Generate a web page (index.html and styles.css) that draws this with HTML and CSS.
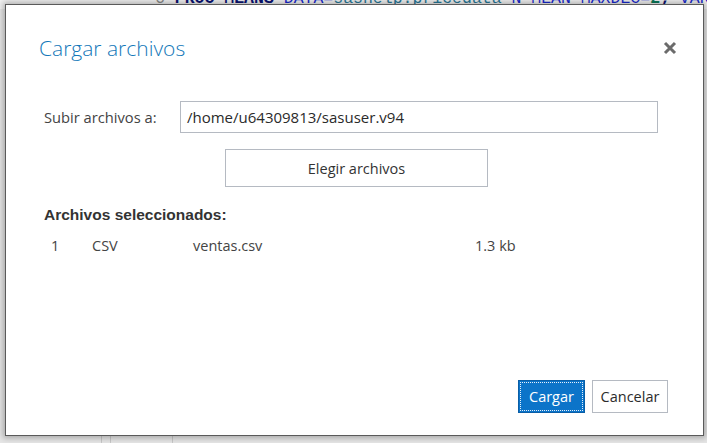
FILE: index.html
```html
<!DOCTYPE html>
<html lang="es">
<head>
<meta charset="utf-8">
<title>Cargar archivos</title>
<link rel="stylesheet" href="styles.css">
</head>
<body>
<div class="page">
  <div class="editor">
    <div class="code-line"><span class="ln">6</span> <span class="kw">PROC MEANS</span> <span class="opt">DATA=</span><span class="ds">sashelp.pricedata</span> <span class="opt">N MEAN MAXDEC=</span><span class="num">2</span><span class="kw">;</span> <span class="opt">VAR</span></div>
    <div class="gutter-lines">
      <span class="gl gl1"></span><span class="gl gl2"></span><span class="gl gl3"></span>
    </div>
  </div>

  <div class="dialog" role="dialog" aria-label="Cargar archivos">
    <div class="dlg-header">
      <h1 class="dlg-title">Cargar archivos</h1>
      <button class="close" aria-label="Cerrar">
        <svg width="14" height="14" viewBox="0 0 14 14"><path d="M2 2 L12 12 M12 2 L2 12" stroke="#6b6b6b" stroke-width="3" stroke-linecap="butt"/></svg>
      </button>
    </div>
    <div class="dlg-body">
      <div class="form-row">
        <label class="lbl">Subir archivos a:</label>
        <div class="input">/home/u64309813/sasuser.v94</div>
      </div>
      <div class="choose-row">
        <button class="btn choose">Elegir archivos</button>
      </div>
      <div class="sel-title">Archivos seleccionados:</div>
      <div class="file-row">
        <span class="c-num">1</span>
        <span class="c-type">CSV</span>
        <span class="c-name">ventas.csv</span>
        <span class="c-size">1.3 kb</span>
      </div>
    </div>
    <div class="dlg-footer">
      <button class="btn primary">Cargar</button>
      <button class="btn secondary">Cancelar</button>
    </div>
  </div>
</div>
</body>
</html>
```

FILE: styles.css
```css
* { box-sizing: border-box; }
html, body { margin: 0; padding: 0; }
body {
  width: 707px;
  height: 443px;
  overflow: hidden;
  background: #e4e4e4;
  font-family: "Open Sans", Lato, sans-serif;
}
.page {
  position: relative;
  display: flow-root;
  width: 707px;
  height: 443px;
}
.editor {
  display: flow-root;
  height: 443px;
  background: #e6e6e6;
  position: relative;
  overflow: hidden;
}
.code-line {
  font-family: "Liberation Mono", monospace;
  font-size: 16.5px;
  font-weight: bold;
  line-height: 20px;
  white-space: pre;
  margin-top: -11px;
  padding-left: 155px;
  color: #0a1a6e;
  background: #f2f2f2;
}
.code-line .ln { color: #8a8a8a; font-weight: normal; }
.code-line .kw { color: #0b1373; }
.code-line .opt { color: #1a2ad0; font-weight: normal; }
.code-line .ds { color: #2a7a9a; font-weight: normal; }
.code-line .num { color: #0b7a5a; }
.gutter-lines .gl {
  position: absolute;
  bottom: 0;
  width: 1px;
  height: 12px;
  background: #c8c8c8;
}
.gl1 { left: 101px; }
.gl2 { left: 110px; }
.gl3 { left: 172px; }

.dialog {
  position: absolute;
  left: 5px;
  top: 4px;
  width: 699px;
  height: 432px;
  background: #fff;
  border: 1px solid #5a5a5a;
  box-shadow: 0 0 6px 2px rgba(0,0,0,0.28);
  display: flex;
  flex-direction: column;
  color: #333;
}
.dlg-header {
  display: flex;
  align-items: center;
  justify-content: space-between;
  padding: 31px 26px 0 33px;
}
.dlg-title {
  margin: 0;
  font-family: "Open Sans", Lato, sans-serif;
  font-weight: 300;
  font-size: 21px;
  line-height: 24px;
  color: #1378b9;
}
.close {
  border: 0;
  background: none;
  padding: 0;
  width: 14px;
  height: 14px;
  display: flex;
}
.dlg-body {
  padding: 41px 0 0 38px;
  flex: 1;
}
.form-row {
  display: flex;
  align-items: center;
  height: 32px;
}
.lbl {
  width: 136px;
  font-size: 14.7px;
  color: #444;
}
.input {
  width: 478px;
  height: 32px;
  border: 1px solid #b5bac2;
  padding: 0 6px;
  display: flex;
  align-items: center;
  font-size: 15px;
  color: #2a2a2a;
}
.choose-row {
  display: flex;
  padding: 16px 0 0 181px;
}
.btn {
  font-family: "Open Sans", Lato, sans-serif;
  font-size: 14.5px;
  background: #fff;
  border: 1px solid #b5bac2;
  color: #333;
  padding: 0;
  cursor: pointer;
}
.choose {
  width: 263px;
  height: 38px;
}
.sel-title {
  font-family: "Liberation Sans", Arial, sans-serif;
  font-weight: bold;
  font-size: 15.5px;
  color: #333;
  margin-top: 18px;
  line-height: 20px;
}
.file-row {
  display: flex;
  align-items: center;
  margin-top: 11px;
  font-size: 14.5px;
  line-height: 20px;
  color: #444;
}
.c-num { width: 48px; padding-left: 7px; }
.c-type { width: 101px; }
.c-name { width: 282px; }
.dlg-footer {
  display: flex;
  justify-content: flex-end;
  gap: 7px;
  padding: 0 35px 22px 0;
}
.primary {
  width: 67px;
  height: 33px;
  background: #0c74c9;
  color: #fff;
  border: 1px solid #0a5ea6;
  outline: 1px dotted #e6f0fa;
  outline-offset: -3px;
}
.secondary {
  width: 76px;
  height: 33px;
  color: #2b2b2b;
}
```
